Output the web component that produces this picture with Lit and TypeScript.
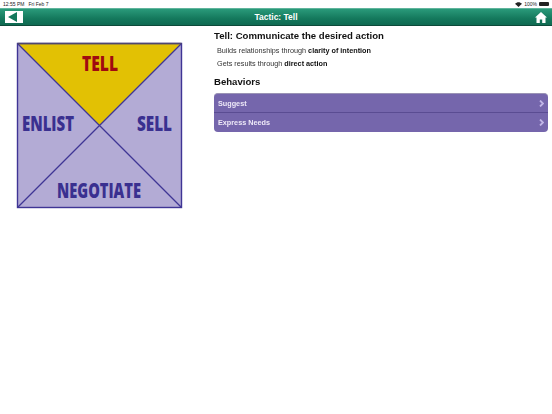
import { LitElement, html, css } from "lit";
import { customElement } from "lit/decorators.js";

@customElement("app-root")
export class AppRoot extends LitElement {
  static styles = css`
    :host { display: block; width: 552px; height: 414px; background: #fff; font-family: "Liberation Sans", Arial, sans-serif; color: #111; overflow: hidden; }
    .status { height: 8px; display: flex; justify-content: space-between; align-items: center; padding: 0 3px; font-size: 5px; line-height: 8px; color: #222; }
    .status .left { display: flex; gap: 4px; }
    .status .right { display: flex; align-items: center; gap: 2px; }
    .battery { width: 10px; height: 4px; background: #222; border-radius: 1px; }
    .nav { height: 18px; box-sizing: border-box; display: grid; grid-template-columns: 40px 1fr 40px; align-items: center; padding: 0 5px; background: linear-gradient(#2a9a7a, #14785c 60%, #0f6a52); border-top: 1px solid #5fb59c; border-bottom: 1px solid #0d4a3a; }
    .title { text-align: center; color: #fff; font-size: 8.5px; font-weight: 700; }
    .back { width: 18px; height: 12px; background: #fff; display: flex; align-items: center; justify-content: flex-start; padding-left: 3px; box-sizing: border-box; }
    .home { justify-self: end; display: block; margin: 1px 0 0; }
    .main { display: flex; padding-top: 17px; padding-left: 17px; }
    .diagram { width: 166px; height: 166px; flex: none; display: block; overflow: visible; }
    .diagram text { font-family: "Open Sans", sans-serif; font-weight: 800; font-size: 21px; }
    .diagram .red { fill: #a00a10; }
    .diagram .blue { fill: #3a3090; }
    .content { margin-left: 31px; width: 334px; margin-top: -14px; will-change: transform; }
    h1 { margin: 0; font-size: 9.6px; line-height: 14px; font-weight: 700; }
    p { margin: 0 0 0 3px; font-size: 7.26px; line-height: 13px; color: #333; }
    p b { color: #111; }
    .p1 { margin-top: 1px; }
    h2 { margin: 5px 0 0; font-size: 9.6px; line-height: 14px; font-weight: 700; }
    .list { margin-top: 4px; border-radius: 4px; overflow: hidden; background: #7566ac; border-top: 1px solid #9a93b5; }
    .row { height: 18px; box-sizing: border-box; display: flex; align-items: center; justify-content: space-between; padding: 0 4px 0 4px; color: #eee9f8; font-size: 7.26px; font-weight: 700; }
    .row + .row { border-top: 1px solid #5a4c92; height: 20px; }
    .chev { display: block; }
  `;

  chevron() {
    return html`<svg class="chev" width="5" height="7" viewBox="0 0 5 7"><path d="M1 .5 4 3.5 1 6.5" fill="none" stroke="#c0b5e6" stroke-width="1.8"/></svg>`;
  }

  render() {
    return html`
      <div class="status">
        <div class="left"><span>12:55 PM</span><span>Fri Feb 7</span></div>
        <div class="right">
          <svg width="7" height="5" viewBox="0 0 7 5"><path d="M0 1.8C2-.4 5-.4 7 1.8L3.5 5Z" fill="#222"/></svg>
          <span>100%</span><div class="battery"></div>
        </div>
      </div>
      <div class="nav">
        <div class="back"><svg width="9" height="10" viewBox="0 0 9 10"><path d="M0 5 9 0V10Z" fill="#14785c"/></svg></div>
        <div class="title">Tactic: Tell</div>
        <svg class="home" width="12" height="11" viewBox="0 0 12 11"><path d="M6 0 12 5.5H10.5V11H7.2V7.5H4.8V11H1.5V5.5H0Z" fill="#fff"/></svg>
      </div>
      <div class="main">
        <svg class="diagram" viewBox="0 0 166 166">
          <rect x=".5" y=".5" width="164" height="164" fill="#b3abd5"/>
          <path d="M.5 .5H164.5L82.5 82.5Z" fill="#e2c104"/>
          <path d="M.5 .5 164.5 164.5M164.5 .5 .5 164.5" stroke="#3f3595" stroke-width="1.3"/>
          <rect x=".5" y=".5" width="164" height="164" fill="none" stroke="#3f3595" stroke-width="1.4"/>
          <path d="M.5 .5H164.5" stroke="#4f4770" stroke-width="1.6"/>
          <text class="red" x="65" y="28" textLength="36" lengthAdjust="spacingAndGlyphs">TELL</text>
          <text class="blue" x="5" y="88" textLength="52" lengthAdjust="spacingAndGlyphs">ENLIST</text>
          <text class="blue" x="120" y="88" textLength="35" lengthAdjust="spacingAndGlyphs">SELL</text>
          <text class="blue" x="40" y="155" textLength="84" lengthAdjust="spacingAndGlyphs">NEGOTIATE</text>
        </svg>
        <div class="content">
          <h1>Tell: Communicate the desired action</h1>
          <p class="p1">Builds relationships through <b>clarity of intention</b></p>
          <p>Gets results through <b>direct action</b></p>
          <h2>Behaviors</h2>
          <div class="list">
            <div class="row"><span>Suggest</span>${this.chevron()}</div>
            <div class="row"><span>Express Needs</span>${this.chevron()}</div>
          </div>
        </div>
      </div>
    `;
  }
}
